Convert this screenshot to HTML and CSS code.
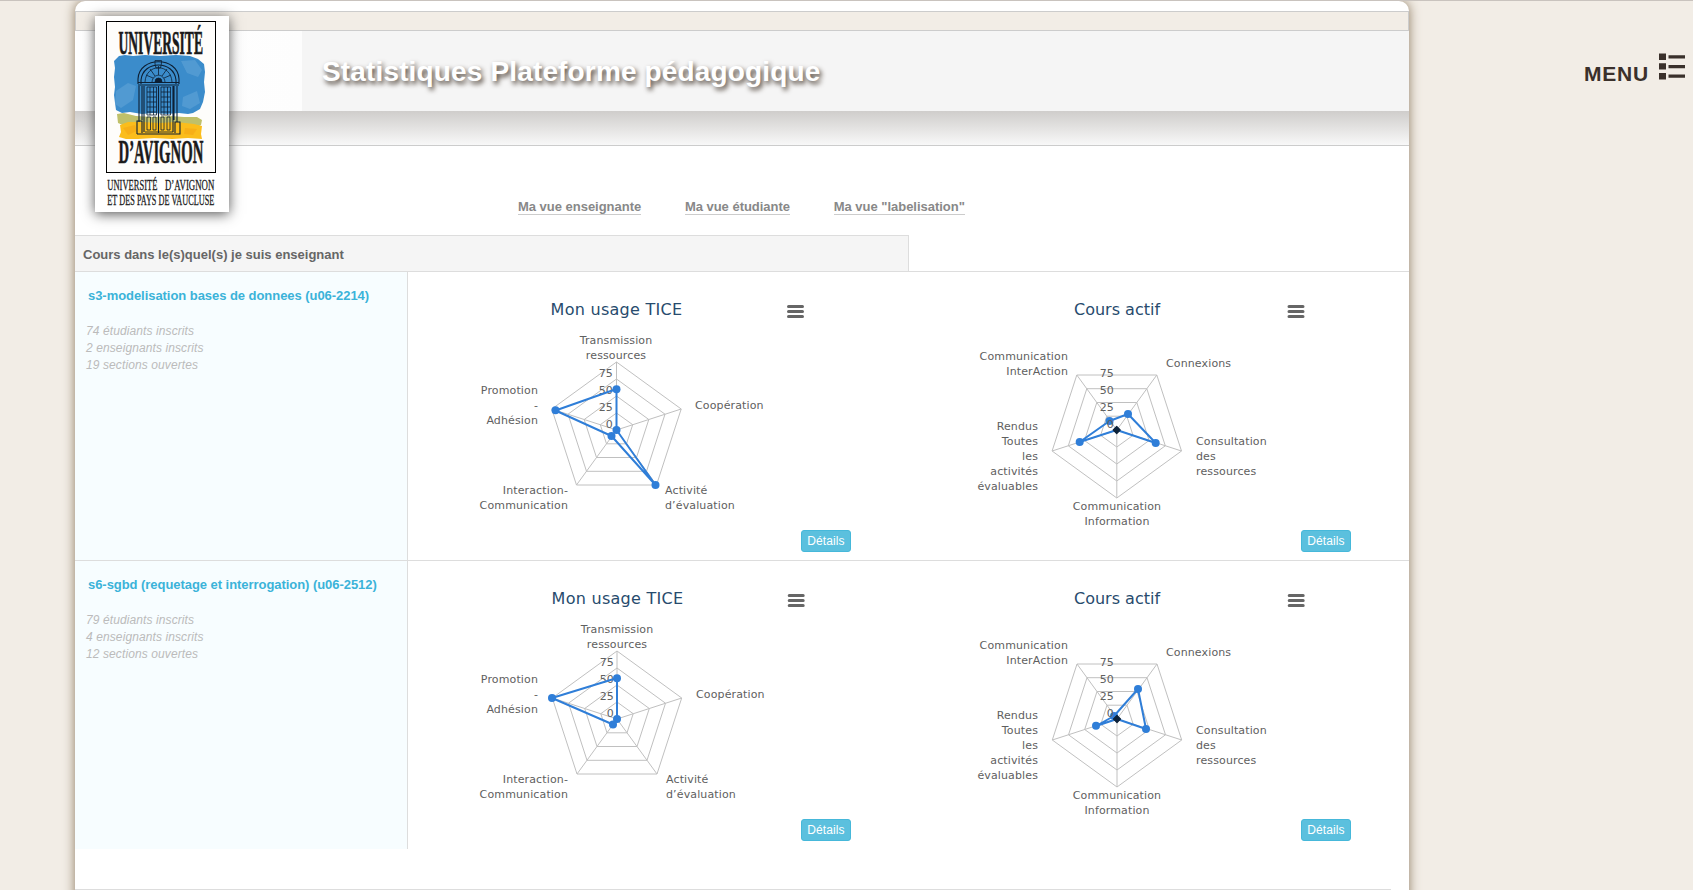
FILE: index.html
```html
<!DOCTYPE html>
<html lang="fr">
<head>
<meta charset="utf-8">
<title>Statistiques Plateforme pédagogique</title>
<link rel="stylesheet" href="styles.css">
</head>
<body>
<svg class="defs" width="0" height="0">
  <defs>
    <g id="web-up" class="grid">
      <path d="M0-68L64.7-21L40 55H-40L-64.7-21ZM0-51L48.5-15.8L30 41.3H-30L-48.5-15.8ZM0-34L32.3-10.5L20 27.5H-20L-32.3-10.5ZM0-17L16.2-5.3L10 13.8H-10L-16.2-5.3Z"/>
      <path d="M0 0V-68M0 0L64.7-21M0 0L40 55M0 0L-40 55M0 0L-64.7-21"/>
    </g>
    <g id="web-down" class="grid">
      <path d="M0 68L64.7 21L40-55H-40L-64.7 21ZM0 51L48.5 15.8L30-41.3H-30L-48.5 15.8ZM0 34L32.3 10.5L20-27.5H-20L-32.3 10.5ZM0 17L16.2 5.3L10-13.8H-10L-16.2 5.3Z"/>
      <path d="M0 0V68M0 0L64.7 21M0 0L40-55M0 0L-40-55M0 0L-64.7 21"/>
    </g>
    <g id="burger" class="burger"><path d="M1.5 1.5H15.5M1.5 6.5H15.5M1.5 11.5H15.5"/></g>
    <g id="scale" class="label end">
      <text x="0" y="-53">75</text><text x="0" y="-36">50</text><text x="0" y="-19">25</text><text x="0" y="-2">0</text>
    </g>
    <g id="labels-actif" class="label">
      <text class="end" x="108" y="70">Communication</text><text class="end" x="108" y="85">InterAction</text>
      <text x="206" y="77">Connexions</text>
      <text x="236" y="155">Consultation</text><text x="236" y="170">des</text><text x="236" y="185">ressources</text>
      <text class="end" x="78" y="140">Rendus</text><text class="end" x="78" y="155">Toutes</text><text class="end" x="78" y="170">les</text><text class="end" x="78" y="185">activités</text><text class="end" x="78" y="200">évaluables</text>
      <text class="mid" x="157" y="220">Communication</text><text class="mid" x="157" y="235">Information</text>
    </g>
    <g id="labels-left" class="label end">
      <text x="78" y="104">Promotion</text><text x="78" y="119">-</text><text x="78" y="134">Adhésion</text>
      <text x="108" y="204">Interaction-</text><text x="108" y="219">Communication</text>
    </g>
    <g id="labels-right" class="label">
      <text class="mid" x="156" y="54">Transmission</text><text class="mid" x="156" y="69">ressources</text>
      <text x="235" y="119">Coopération</text>
      <text x="205" y="204">Activité</text><text x="205" y="219">d’évaluation</text>
    </g>
  </defs>
</svg>

<main class="page">
  <div class="strip"></div>
  <header class="banner">
    <div class="banner-side"></div>
    <h1 class="banner-title">Statistiques Plateforme pédagogique</h1>
  </header>
  <div class="shade"></div>

  <svg class="logo" viewBox="0 0 134 196">
    <rect class="frame" x="11.5" y="5.5" width="109" height="151"/>
    <path fill="#3b8ccb" d="M24 40l6-1 8 1 12-1 15 1 16-1 14 1 8 3 6 5 1 8-1 10 1 10-2 10-3 7-7 4-5 1-9-1-12 1-14-1-11 1-12-2-8 1-6-3-1-7-1-8 1-8-1-10 1-9-1-7z"/>
    <path fill="#7ab4e0" opacity=".35" d="M21 75l12-8 8 3-3 14-12 8-6-4zM86 45l14-1 7 10-4 7-11-4zM88 81l14-6 3 12-10 6-8-3z"/>
    <path fill="#bfc06a" d="M22 98l7-1 12 3 18 1 16-1 14 1 13 0 5 3-1 5-6 3-10-2-20-1-16 0-14-2-10 3-7-3z"/>
    <path fill="#fbbd1c" d="M25 109l8-3 14 0 18 1 16-1 18 2 8 2-1 8 1 5-14-1-16 1-18-1-16 1-12 0-7-2 2-5z"/>
    <path fill="#f39a12" opacity=".4" d="M28 112l12-3 2 6-9 4zM90 112l12 1-4 6-9-1z"/>
    <g class="door">
      <path class="thick" d="M43 68V63C44 40 83 40 84 63V68M46 68V64C48 44 79 44 81 64V68M43 69H84M43 66.5H84M44 70V106M47 70V104M82 70V106M79 70V104M42 118H85V106H80V117M42 118V105H47V117M63.500 70V117M49 70V116M78 70V116"/>
      <path d="M50 66C51 47 76 47 77 66M57 66C58 57 69 57 70 66M63.500 59V50M60 60L55 53M67 60L72 53M58 62L51 59M69 62L76 59"/>
      <path d="M52 71V99H61.500V71ZM66 71V99H75.500V71ZM55 71V99M58.500 71V99M69 71V99M72.500 71V99M52 76H61.500M52 81H61.500M52 86H61.500M52 91H61.500M52 96H61.500M66 76H75.500M66 81H75.500M66 86H75.500M66 91H75.500M66 96H75.500"/>
      <path d="M52 101H55.500V114H52ZM58 101H61V114H58ZM66 101H69V114H66ZM72 101H75V114H72ZM50 116H78"/>
      <path fill="#4c97cf" d="M60 44.500H66.500V47L65.500 52H61L60 48Z"/>
      <path class="dark" d="M60 66a3.500 4 0 0 1 7 0z"/>
    </g>
    <g class="logo-big">
      <text transform="translate(23.5 37.5) scale(.414 1)" textLength="204" lengthAdjust="spacingAndGlyphs">UNIVERSITÉ</text>
      <text transform="translate(23.5 147) scale(.437 1)" textLength="194" lengthAdjust="spacingAndGlyphs">D’AVIGNON</text>
    </g>
    <g class="logo-small">
      <text transform="translate(12.3 173.5) scale(.55 1)" textLength="91" lengthAdjust="spacingAndGlyphs">UNIVERSITÉ</text>
      <text transform="translate(70 173.5) scale(.58 1)" textLength="85" lengthAdjust="spacingAndGlyphs">D’AVIGNON</text>
      <text transform="translate(12.3 188.5) scale(.5 1)" textLength="214" lengthAdjust="spacingAndGlyphs">ET DES PAYS DE VAUCLUSE</text>
    </g>
  </svg>

  <nav class="views">
    <a>Ma vue enseignante</a>
    <a>Ma vue étudiante</a>
    <a>Ma vue "labelisation"</a>
  </nav>

  <div class="tabs"><h2 class="tab">Cours dans le(s)quel(s) je suis enseignant</h2></div>

  <section class="course">
    <div class="info">
      <h3>s3-modelisation bases de donnees (u06-2214)</h3>
      <p>74 étudiants inscrits<br>2 enseignants inscrits<br>19 sections ouvertes</p>
    </div>
    <div class="chart">
      <svg width="420" height="240">
        <text class="title wide" x="156.500" y="25">Mon usage TICE</text>
        <use href="#burger" x="327" y="15"/>
        <use href="#web-up" x="156.500" y="140"/>
        <use href="#labels-left"/><use href="#labels-right"/>
        <use href="#scale" x="153" y="140"/>
        <g class="series"><path d="M156.500 99V140L195.500 195L151.500 146L95.500 120.500Z"/>
        <circle cx="156.500" cy="99.300" r="4"/><circle cx="156.500" cy="140" r="4"/><circle cx="195.500" cy="195" r="4"/><circle cx="151.500" cy="146" r="4"/><circle cx="95.500" cy="120.300" r="4"/></g>
      </svg>
      <a class="details">Détails</a>
    </div>
    <div class="chart">
      <svg width="420" height="240">
        <text class="title" x="157" y="25">Cours actif</text>
        <use href="#burger" x="327.500" y="15"/>
        <use href="#web-down" x="156.800" y="140"/>
        <use href="#labels-actif"/>
        <g class="series"><path d="M168 124L195.700 153L156.700 140L119.700 152L149.500 131Z"/>
        <circle cx="168" cy="124" r="4"/><circle cx="195.700" cy="153" r="4"/><circle cx="119.700" cy="152" r="4"/><circle cx="149.500" cy="131" r="4"/></g>
        <path class="zero" d="M156.700 136.500L160.200 140L156.700 143.500L153.200 140Z"/>
        <use href="#scale" x="154" y="140"/>
      </svg>
      <a class="details">Détails</a>
    </div>
  </section>

  <section class="course">
    <div class="info">
      <h3>s6-sgbd (requetage et interrogation) (u06-2512)</h3>
      <p>79 étudiants inscrits<br>4 enseignants inscrits<br>12 sections ouvertes</p>
    </div>
    <div class="chart">
      <svg width="420" height="240">
        <text class="title wide" x="157.500" y="25">Mon usage TICE</text>
        <use href="#burger" x="327.700" y="15"/>
        <use href="#web-up" x="157" y="140"/>
        <use href="#labels-left"/><use href="#labels-right" x="1"/>
        <use href="#scale" x="154" y="140"/>
        <g class="series"><path d="M157 99V140L153 145.500L92 119Z"/>
        <circle cx="157" cy="99.300" r="4"/><circle cx="157" cy="140" r="4"/><circle cx="153" cy="145.500" r="4"/><circle cx="92" cy="119" r="4"/></g>
      </svg>
      <a class="details">Détails</a>
    </div>
    <div class="chart">
      <svg width="420" height="240">
        <text class="title" x="157" y="25">Cours actif</text>
        <use href="#burger" x="327.700" y="15"/>
        <use href="#web-down" x="157" y="140"/>
        <use href="#labels-actif"/>
        <g class="series"><path d="M178 110L186 150L157 140L136 147L154 137Z"/>
        <circle cx="178" cy="110" r="4"/><circle cx="186" cy="150" r="4"/><circle cx="136" cy="146.700" r="4"/><circle cx="154" cy="137" r="4"/></g>
        <path class="zero" d="M157 136.500L160.500 140L157 143.500L153.500 140Z"/>
        <use href="#scale" x="154" y="140"/>
      </svg>
      <a class="details">Détails</a>
    </div>
  </section>
  <div class="footer-line"></div>
</main>

<aside class="menu">
  <span>MENU</span>
  <svg width="26" height="27" viewBox="0 0 26 27"><path d="M0 .500H7V7H0ZM0 10.300H7V16.500H0ZM0 20H7V26.500H0ZM9.500 2.200H26V5.500H9.500ZM9.500 12H26V15.200H9.500ZM9.500 21.500H26V24.700H9.500Z"/></svg>
</aside>
</body>
</html>
```

FILE: styles.css
```css
* { box-sizing: border-box; }
body {
  margin: 0;
  height: 890px;
  overflow: hidden;
  display: flex;
  align-items: flex-start;
  background: #f2ede6;
  border-top: 1px solid #c9c3be;
  font-family: "Liberation Sans", Arial, sans-serif;
  color: #666;
}
h1, h2, h3, p { margin: 0; }
.defs { position: absolute; }

.page {
  position: relative;
  flex: none;
  width: 1334px;
  height: 920px;
  margin-left: 75px;
  padding-top: 10px;
  background: #fff;
  border-radius: 10px 10px 0 0;
  box-shadow: 0 0 12px #8d7a60;
}
.strip {
  height: 20px;
  background: #f2ede6;
  border: 1px solid #ccc;
}
.banner { display: flex; height: 80px; background: #f5f5f5; }
.banner-side { width: 227px; background: linear-gradient(90deg, #fff, #fdfdfd); }
.banner-title {
  padding-left: 20px;
  font-size: 28px;
  line-height: 81px;
  letter-spacing: .15px;
  color: #fff;
  text-shadow: 2px 3px 5px #4a3f35;
}
.shade {
  height: 35px;
  background: linear-gradient(#cfcdcb, #f8f8f8);
  border-bottom: 1px solid #ccc;
}

.logo {
  position: absolute;
  left: 20px;
  top: 15px;
  width: 134px;
  height: 196px;
  background: #fff;
  box-shadow: 0 2px 12px #555;
}
.frame { fill: #fefdfb; stroke: #000; }
.logo text { font-family: "Liberation Serif", serif; fill: #1a1a1a; stroke: #1a1a1a; }
.logo-big { font-size: 33px; font-weight: bold; stroke-width: .7; }
.logo-small { font-size: 15px; stroke-width: .3; }
.door path { fill: none; stroke: #0d1f33; stroke-width: .8; }
.door .thick { stroke-width: 1.1; }
.door .dark { fill: #0d1f33; }

.views {
  display: flex;
  gap: 43.7px;
  height: 89px;
  padding: 53px 0 0 443px;
  font-size: 13px;
  font-weight: bold;
  letter-spacing: -.02px;
  color: #888;
}
.views a { height: 16px; line-height: 15px; border-bottom: 1px solid #ccc; }

.tabs { height: 37px; border-bottom: 1px solid #ddd; }
.tab {
  width: 834px;
  height: 36px;
  padding-left: 8px;
  background: #f5f5f5;
  border: 1px solid #ddd;
  border-width: 1px 1px 0 0;
  font-size: 13px;
  line-height: 37px;
}

.course { display: flex; height: 289px; }
.course + .course { height: 288px; }
.course:not(:has(+ .footer-line)) { border-bottom: 1px solid #ddd; }
.info {
  width: 333px;
  padding: 16px 0 0 11px;
  background: #f7fdff;
  border-right: 1px solid #ddd;
}
.info h3 {
  padding-left: 2px;
  font-size: 13px;
  line-height: 16px;
  letter-spacing: -.05px;
  color: #3bb3d9;
}
.info p {
  padding-top: 19px;
  font-size: 12px;
  line-height: 17px;
  letter-spacing: .1px;
  font-style: italic;
  color: #bbb;
}
.chart { width: 500px; padding: 18px 0 0 52px; }
.chart svg { display: block; }
.chart text { font-family: "DejaVu Sans", sans-serif; }
.title { font-size: 16px; fill: #274b6d; text-anchor: middle; }
.wide { letter-spacing: .28px; }
.grid { fill: none; stroke: #c0c0c0; stroke-width: 1; }
.label {
  font-family: "DejaVu Sans", sans-serif;
  font-size: 11px;
  letter-spacing: .13px;
  fill: #606060;
}
.end { text-anchor: end; }
.mid { text-anchor: middle; }
.burger { stroke: #666; stroke-width: 3; stroke-linecap: round; }
.series path { fill: none; stroke: #2f7ed8; stroke-width: 2; stroke-linejoin: round; }
.series circle { fill: #2f7ed8; }
.zero { fill: #0d233a; stroke: #0d233a; stroke-width: 1.2; stroke-linejoin: round; }
.details {
  display: block;
  width: 50px;
  height: 22px;
  margin-left: 341px;
  background: #5bc0de;
  border: 1px solid #46b8da;
  border-radius: 3px;
  font-size: 12px;
  line-height: 20px;
  letter-spacing: .1px;
  text-align: center;
  color: #fff;
}
.footer-line { width: 1316px; height: 41px; border-bottom: 1px solid #ddd; }

.menu {
  display: flex;
  gap: 10px;
  margin: 52px 8px 0 auto;
  font-size: 21px;
  font-weight: bold;
  letter-spacing: .8px;
  color: #3a302b;
}
.menu span { padding-top: 9px; line-height: 24px; }
.menu svg { fill: #3a302b; }
```
